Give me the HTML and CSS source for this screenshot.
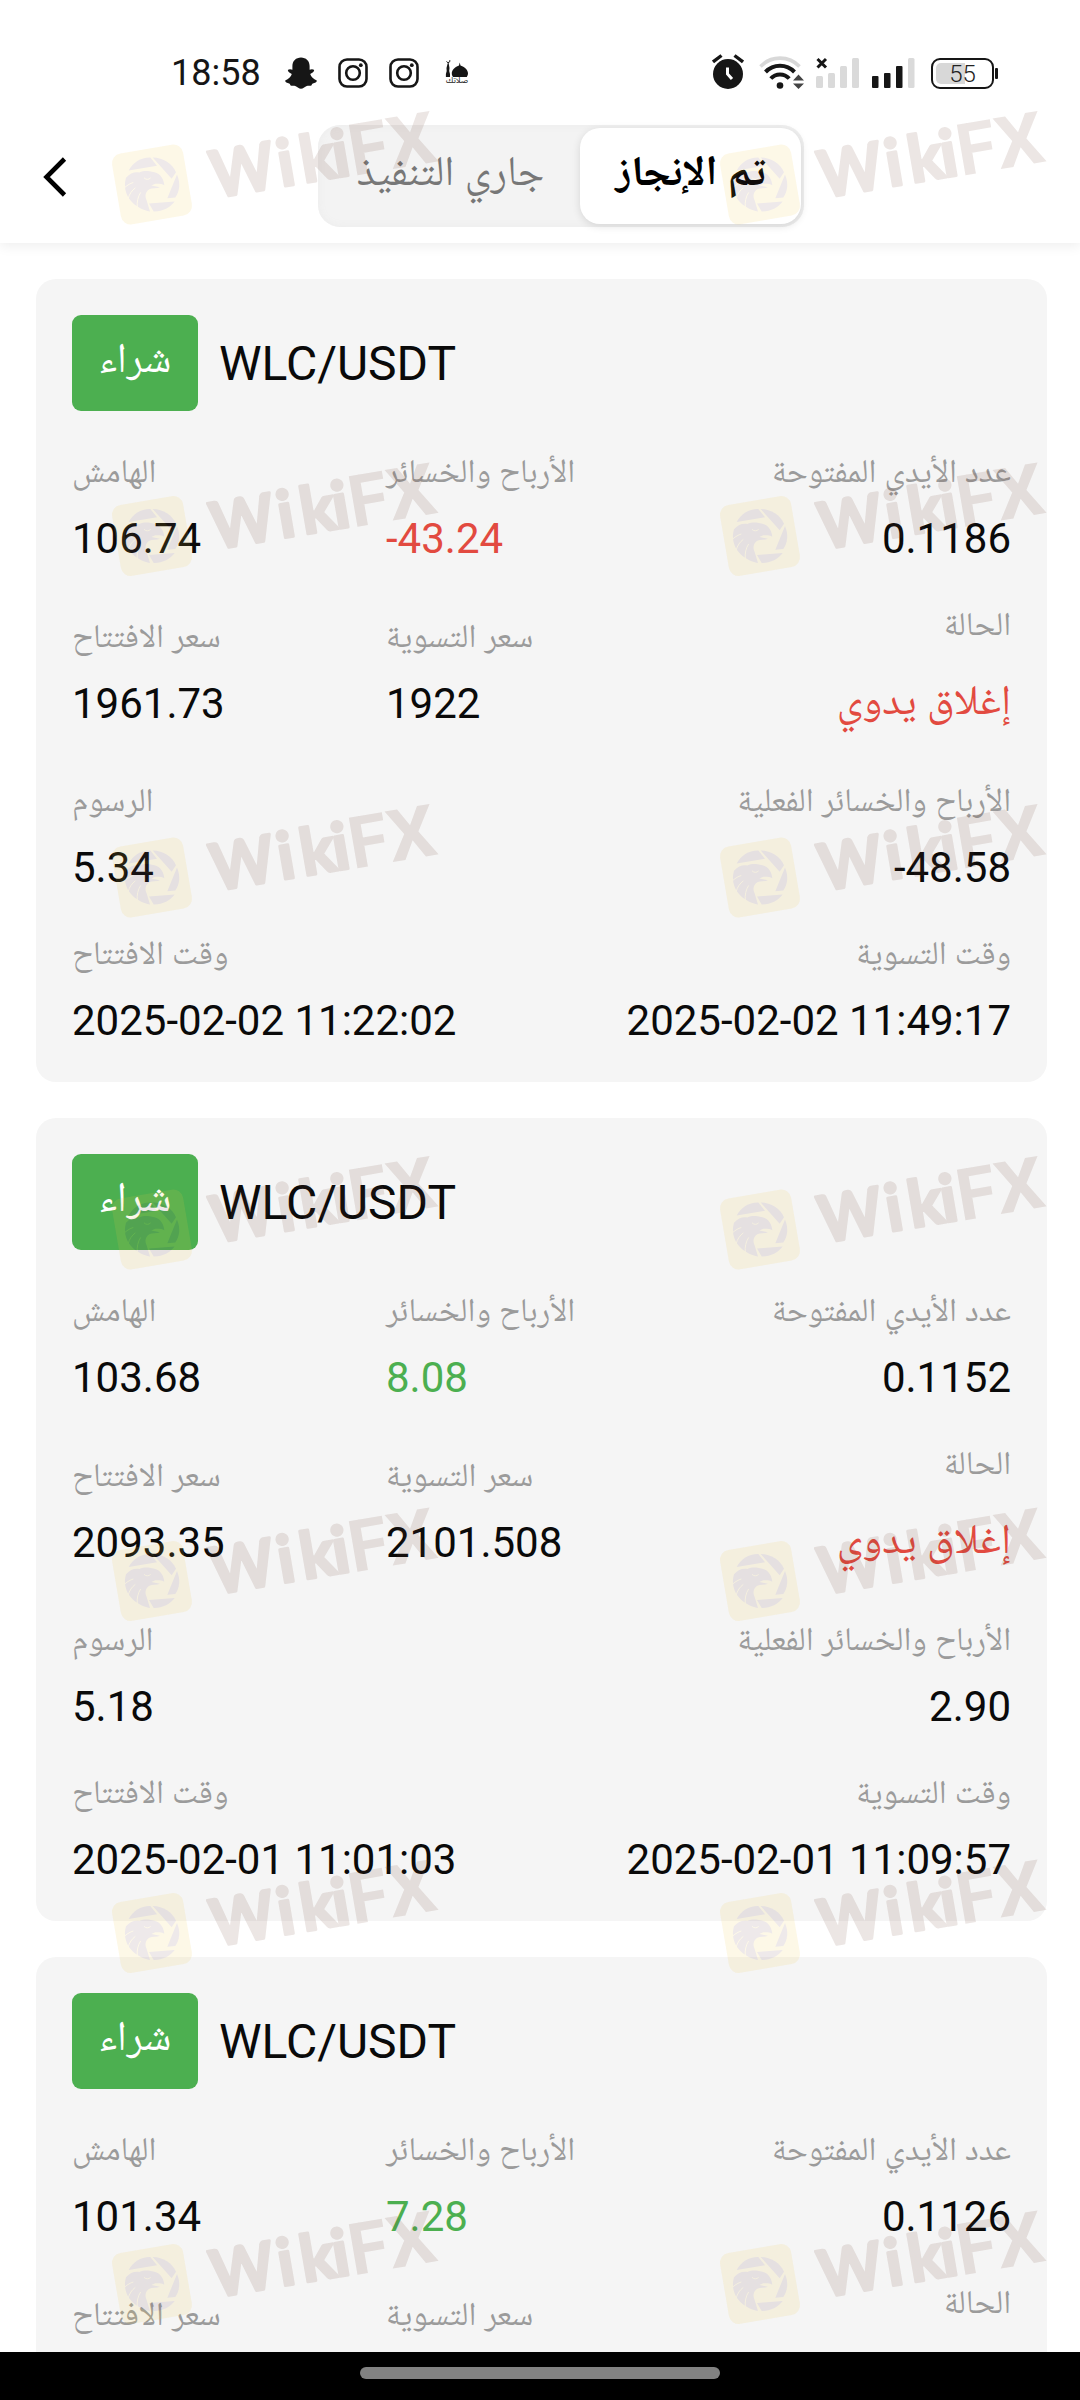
FILE: index.html
```
<!DOCTYPE html>
<html lang="ar">
<head>
  <meta charset="UTF-8" />
  <title>WLC/USDT</title>
  <link rel="stylesheet" href="styles.css">
</head>
<body>
  <div class="screen">
    <!-- Status bar -->
    <div class="status-bar">
      <div class="status-side">
        <span class="clock">18:58</span>
        <svg class="icon-snap" width="32" height="32" viewBox="0 0 32 32">
          <path fill="#161616" d="M16 .5c5 0 8.600 3.500 8.600 8.500v3.800c1.300-.7 3.600-.8 4.600.2-.3 2.200-2.400 3.200-4 4 .8 3 3.300 5 6.600 6.400.2 1.800-2 2.500-4 3-1.300.4-.7 2.200-2.200 2.300-1.500 0-3-.2-4.400.6-1.700 1-3.100 2.400-5.200 2.400s-3.500-1.400-5.200-2.400c-1.400-.8-2.900-.6-4.400-.6-1.500-.1-.9-1.900-2.200-2.300-2-.5-4.200-1.200-4-3 3.300-1.400 5.800-3.400 6.600-6.400-1.600-.8-3.700-1.800-4-4 1-1 3.300-.9 4.600-.2V9C7.400 4 11 .5 16 .5z"/>
        </svg>
        <svg class="icon-insta" width="30" height="30" viewBox="0 0 30 30">
          <g fill="none" stroke="#161616" stroke-width="2.600">
            <rect x="1.500" y="1.500" width="27" height="27" rx="7.500"/>
            <circle cx="15" cy="15" r="6.800"/>
          </g>
          <circle cx="22.800" cy="7.200" r="1.900" fill="#161616"/>
        </svg>
        <svg class="icon-insta" width="30" height="30" viewBox="0 0 30 30">
          <g fill="none" stroke="#161616" stroke-width="2.600">
            <rect x="1.500" y="1.500" width="27" height="27" rx="7.500"/>
            <circle cx="15" cy="15" r="6.800"/>
          </g>
          <circle cx="22.800" cy="7.200" r="1.900" fill="#161616"/>
        </svg>
        <svg class="icon-mosque" width="30" height="44" viewBox="-3 -9 30 44">
          <path fill="#161616" d="M2.500 5h1.300l.7 4-.3 3 .8 3v3H.9V15l.8-3-.2-3zM14.700 3.500l.8 3c5 1.500 7.500 5 7.500 8 0 1.500-.8 2.500-1.200 3.500H8c-.5-1-1.300-2-1.200-3.500 0-3 2.500-6.500 7.200-8z"/>
          <path fill="none" stroke="#161616" stroke-width="1" d="M4.800 1.200a1.700 1.700 0 1 1-3.200 1.200M3.200 3v2"/>
          <text x="12" y="23.500" text-anchor="middle" font-size="8" textLength="22" lengthAdjust="spacingAndGlyphs" class="mosque-text">صلاتك</text>
        </svg>
      </div>
      <div class="status-side">
        <svg class="icon-alarm" width="32" height="35" viewBox="0 0 32 35">
          <circle cx="16" cy="20" r="15" fill="#161616"/>
          <path fill="none" stroke="#161616" stroke-width="3.400" d="M1 8l8.500-6.500M31 8l-8.500-6.500"/>
          <path fill="none" stroke="#fff" stroke-width="3" d="M15.500 13.500V20l4.500 5"/>
        </svg>
        <svg class="icon-wifi" width="46" height="36" viewBox="0 0 46 36">
          <path fill="none" stroke="#d8d8d8" stroke-width="3.600" d="M1.500 12.500a27 27 0 0 1 39 0"/>
          <g fill="none" stroke="#161616" stroke-width="4">
            <path d="M6.500 18a20 20 0 0 1 29 0"/>
            <path d="M11.800 24.500a12.500 12.500 0 0 1 18.400 0"/>
          </g>
          <circle cx="21" cy="31.500" r="3.300" fill="#161616"/>
          <path fill="#444" stroke="#fff" stroke-width="1.500" paint-order="stroke" d="M34 26.500l5.500-6 5.500 6zM34 29.500l5.500 5.500 5.500-5.500z"/>
        </svg>
        <svg class="icon-signal-off" width="43" height="32" viewBox="0 0 43 32">
          <path fill="none" stroke="#161616" stroke-width="3" d="M1.500 2l8.500 8.500M10 2l-8.500 8.500"/>
          <g fill="#dadada">
            <rect x="0" y="19" width="7" height="12" rx="1.500"/>
            <rect x="12" y="16" width="7" height="15" rx="1.500"/>
            <rect x="24" y="9" width="7" height="22" rx="1.500"/>
            <rect x="36" y="1" width="7" height="30" rx="1.500"/>
          </g>
        </svg>
        <svg class="icon-signal" width="43" height="32" viewBox="0 0 43 32">
          <g fill="#161616">
            <rect x="0" y="19" width="6.500" height="12" rx="1"/>
            <rect x="12" y="16" width="6.500" height="15" rx="1"/>
            <rect x="24" y="9" width="6.500" height="22" rx="1"/>
          </g>
          <rect x="36" y="1" width="6.500" height="30" rx="1.500" fill="#dadada"/>
        </svg>
        <div class="battery"><span class="battery-level">55</span></div>
      </div>
    </div>

    <!-- Header with the two tabs -->
    <div class="header">
      <svg class="back" width="24" height="40" viewBox="0 0 24 40">
        <path fill="none" stroke="#000" stroke-width="4.600" d="M21.500 2L3.500 20l18 18"/>
      </svg>
      <div class="tabs">
        <div class="tab">جاري التنفيذ</div>
        <div class="tab active">تم الإنجاز</div>
      </div>
    </div>

    <!-- Order list -->
    <div class="list">
      <div class="card">
        <div class="card-head"><span class="badge">شراء</span><span class="pair">WLC/USDT</span></div>
        <div class="row">
          <div class="cell"><span class="label">الهامش</span><span class="value">106.74</span></div>
          <div class="cell"><span class="label">الأرباح والخسائر</span><span class="value red">-43.24</span></div>
          <div class="cell end"><span class="label">عدد الأيدي المفتوحة</span><span class="value">0.1186</span></div>
        </div>
        <div class="row prices">
          <div class="cell"><span class="label">سعر الافتتاح</span><span class="value">1961.73</span></div>
          <div class="cell"><span class="label">سعر التسوية</span><span class="value">1922</span></div>
          <div class="cell end state"><span class="label">الحالة</span><span class="value red">إغلاق يدوي</span></div>
        </div>
        <div class="row pair-row fees">
          <div class="cell"><span class="label">الرسوم</span><span class="value">5.34</span></div>
          <div class="cell end"><span class="label">الأرباح والخسائر الفعلية</span><span class="value">-48.58</span></div>
        </div>
        <div class="row pair-row">
          <div class="cell"><span class="label">وقت الافتتاح</span><span class="value">2025-02-02 11:22:02</span></div>
          <div class="cell end"><span class="label">وقت التسوية</span><span class="value">2025-02-02 11:49:17</span></div>
        </div>
      </div>

      <div class="card">
        <div class="card-head"><span class="badge">شراء</span><span class="pair">WLC/USDT</span></div>
        <div class="row">
          <div class="cell"><span class="label">الهامش</span><span class="value">103.68</span></div>
          <div class="cell"><span class="label">الأرباح والخسائر</span><span class="value green">8.08</span></div>
          <div class="cell end"><span class="label">عدد الأيدي المفتوحة</span><span class="value">0.1152</span></div>
        </div>
        <div class="row prices">
          <div class="cell"><span class="label">سعر الافتتاح</span><span class="value">2093.35</span></div>
          <div class="cell"><span class="label">سعر التسوية</span><span class="value">2101.508</span></div>
          <div class="cell end state"><span class="label">الحالة</span><span class="value red">إغلاق يدوي</span></div>
        </div>
        <div class="row pair-row fees">
          <div class="cell"><span class="label">الرسوم</span><span class="value">5.18</span></div>
          <div class="cell end"><span class="label">الأرباح والخسائر الفعلية</span><span class="value">2.90</span></div>
        </div>
        <div class="row pair-row">
          <div class="cell"><span class="label">وقت الافتتاح</span><span class="value">2025-02-01 11:01:03</span></div>
          <div class="cell end"><span class="label">وقت التسوية</span><span class="value">2025-02-01 11:09:57</span></div>
        </div>
      </div>

      <div class="card">
        <div class="card-head"><span class="badge">شراء</span><span class="pair">WLC/USDT</span></div>
        <div class="row">
          <div class="cell"><span class="label">الهامش</span><span class="value">101.34</span></div>
          <div class="cell"><span class="label">الأرباح والخسائر</span><span class="value green">7.28</span></div>
          <div class="cell end"><span class="label">عدد الأيدي المفتوحة</span><span class="value">0.1126</span></div>
        </div>
        <div class="row prices">
          <div class="cell"><span class="label">سعر الافتتاح</span></div>
          <div class="cell"><span class="label">سعر التسوية</span></div>
          <div class="cell end state"><span class="label">الحالة</span></div>
        </div>
      </div>
    </div>

    <div class="nav-bar"><span class="nav-handle"></span></div>

    <!-- Watermark layer -->
    <svg class="watermark" width="1080" height="2400" viewBox="0 0 1080 2400">
      <defs>
        <g id="mark">
          <rect x="-36" y="-36" width="72" height="72" rx="10" fill="#f0c94a" transform="rotate(-9.700)"/>
          <g transform="scale(.3333) translate(-150 -178)">
            <g fill="#7a5560">
              <path d="M80 136C92 112 118 96 145 97l20 25z"/>
              <path d="M152 97c33 1 58 18 70 44l-13 20z"/>
              <path d="M225 148c11 26 8 50-5 69l-24 2z"/>
              <path d="M218 229c-13 18-38 31-63 30l-14-24z"/>
              <path d="M72 158c13-14 24-18 40-16 14-7 30-5 38-2 20 2 34 15 37 40-7-4-17-5-27-4l-12 5 26 5c-9 4-24 2-32 6-12 8-14 20-8 34l10 33c-38-7-72-34-75-74-1-10 1-20 3-27z"/>
            </g>
            <g fill="none" stroke="#f0c94a" stroke-width="3">
              <path d="M68 187c10-8 16-12 26-15M78 222c4-16 12-26 22-34M106 248c-2-18 2-34 10-46M126 158c6 6 14 6 20 0"/>
            </g>
          </g>
          <g class="mark-text" transform="rotate(-9.700)">
            <text class="mark-round" y="24"><tspan x="59.500" textLength="64" lengthAdjust="spacingAndGlyphs">W</tspan><tspan x="127">i</tspan><tspan x="150">k</tspan><tspan x="182.500">i</tspan></text>
            <text class="mark-bold" y="25.500"><tspan x="199.500">F</tspan><tspan x="239" textLength="48" lengthAdjust="spacingAndGlyphs">X</tspan></text>
          </g>
        </g>
      </defs>
      <g class="marks">
        <use href="#mark" x="152" y="184.500"/><use href="#mark" x="760" y="184.500"/>
        <use href="#mark" x="152" y="536"/><use href="#mark" x="760" y="536"/>
        <use href="#mark" x="152" y="877.500"/><use href="#mark" x="760" y="877.500"/>
        <use href="#mark" x="152" y="1229.500"/><use href="#mark" x="760" y="1229.500"/>
        <use href="#mark" x="152" y="1581"/><use href="#mark" x="760" y="1581"/>
        <use href="#mark" x="152" y="1933"/><use href="#mark" x="760" y="1933"/>
        <use href="#mark" x="152" y="2284"/><use href="#mark" x="760" y="2284"/>
      </g>
    </svg>
  </div>
</body>
</html>
```
FILE: styles.css
```
* {
  box-sizing: border-box;
}

body {
  margin: 0;
  background: #fff;
  font-family: Roboto, "Noto Naskh Arabic", sans-serif;
  color: #0a0a0a;
}

.screen {
  position: relative;
  display: flex;
  flex-direction: column;
  width: 1080px;
  height: 2400px;
  overflow: hidden;
}

/* Status bar */
.status-bar {
  display: flex;
  justify-content: space-between;
  height: 110px;
  padding: 38px 82px 0 171px;
}

.status-side {
  display: flex;
  align-items: center;
  height: 70px;
}

.clock {
  width: 114px;
  font-size: 36px;
  line-height: 70px;
  color: #161616;
}

.icon-insta {
  margin-left: 21px;
}

.icon-mosque {
  margin: 0 0 3px 23px;
}

.mosque-text {
  font-family: "Noto Sans Arabic", "DejaVu Sans", sans-serif;
  fill: #161616;
}

.icon-alarm {
  margin-bottom: 3px;
}

.icon-wifi {
  margin: 0 0 3px 15px;
}

.icon-signal-off {
  margin-left: 11px;
}

.icon-signal {
  margin: 0 16px 0 13px;
}

.battery {
  position: relative;
  width: 63px;
  height: 31px;
  padding: 3px;
  border: 2px solid #161616;
  border-radius: 9px;
  margin-right: 4px;
}

.battery::after {
  content: "";
  position: absolute;
  right: -6px;
  top: 8px;
  width: 3px;
  height: 11px;
  border-radius: 1px;
  background: #161616;
}

.battery-level {
  display: block;
  height: 21px;
  border-radius: 5px;
  background: linear-gradient(90deg, #d8d8d8 54%, transparent 54%);
  font-size: 24px;
  font-weight: 300;
  line-height: 22px;
  text-align: center;
  color: #222;
}

/* Header */
.header {
  display: flex;
  align-items: flex-start;
  height: 133px;
  padding-left: 43px;
  background: #fff;
  box-shadow: 0 3px 12px rgba(0, 0, 0, 0.07);
  clip-path: inset(0 0 -20px 0);
}

.back {
  margin-top: 47px;
}

.tabs {
  display: flex;
  width: 486px;
  height: 102px;
  margin: 15px 0 0 251px;
  padding: 3px;
  border-radius: 22px;
  background: #f3f3f3;
  box-shadow: inset 0 0 9px #ececec;
}

.tab {
  flex: 1;
  font-size: 42px;
  line-height: 86px;
  text-align: center;
  color: #777;
}

.tab.active {
  flex: none;
  width: 221px;
  border-radius: 20px;
  background: #fff;
  box-shadow: 0 2px 9px rgba(0, 0, 0, 0.12);
  font-weight: 700;
  color: #000;
}

/* Order cards */
.list {
  flex: 1;
  padding: 36px 33px 0 36px;
  overflow: hidden;
}

.card {
  height: 803px;
  margin-bottom: 36px;
  padding: 36px;
  border-radius: 20px;
  background: #f5f5f5;
}

.card-head {
  display: flex;
  align-items: center;
  margin-bottom: 31px;
}

.badge {
  width: 126px;
  height: 96px;
  margin-right: 21px;
  border-radius: 9px;
  background: #4caf50;
  font-size: 42px;
  line-height: 86px;
  text-align: center;
  color: #fff;
}

.pair {
  font-size: 48px;
}

.row {
  display: grid;
  grid-template-columns: 314px 1fr 1fr;
  height: 165px;
}

.row.prices {
  height: 164px;
}

.row.pair-row {
  grid-template-columns: 1fr 1fr;
}

.row.fees {
  height: 153px;
}

.cell {
  display: flex;
  flex-direction: column;
  gap: 10px;
}

.cell.end {
  text-align: right;
}

.cell.state {
  gap: 18px;
  margin-top: -12px;
}

.label {
  font-size: 33px;
  line-height: 58px;
  color: #9b9b9b;
}

.value {
  font-size: 42px;
  line-height: 58px;
}

.red {
  color: #e24a40;
}

.green {
  color: #4caf50;
}

/* Bottom navigation */
.nav-bar {
  display: flex;
  justify-content: center;
  height: 48px;
  padding-top: 15px;
  background: #000;
}

.nav-handle {
  width: 360px;
  height: 12px;
  border-radius: 6px;
  background: #828282;
}

/* Watermark */
.watermark {
  position: absolute;
  left: 0;
  top: 0;
  pointer-events: none;
}

.marks {
  opacity: 0.13;
}

.mark-text {
  fill: #6d3f2f;
  font-family: Roboto, sans-serif;
}

.mark-round {
  font-family: Lato, sans-serif;
  font-size: 65px;
  font-weight: 700;
  stroke: #6d3f2f;
  stroke-width: 3px;
  stroke-linejoin: round;
}

.mark-bold {
  font-size: 72px;
  font-weight: 700;
}
```
